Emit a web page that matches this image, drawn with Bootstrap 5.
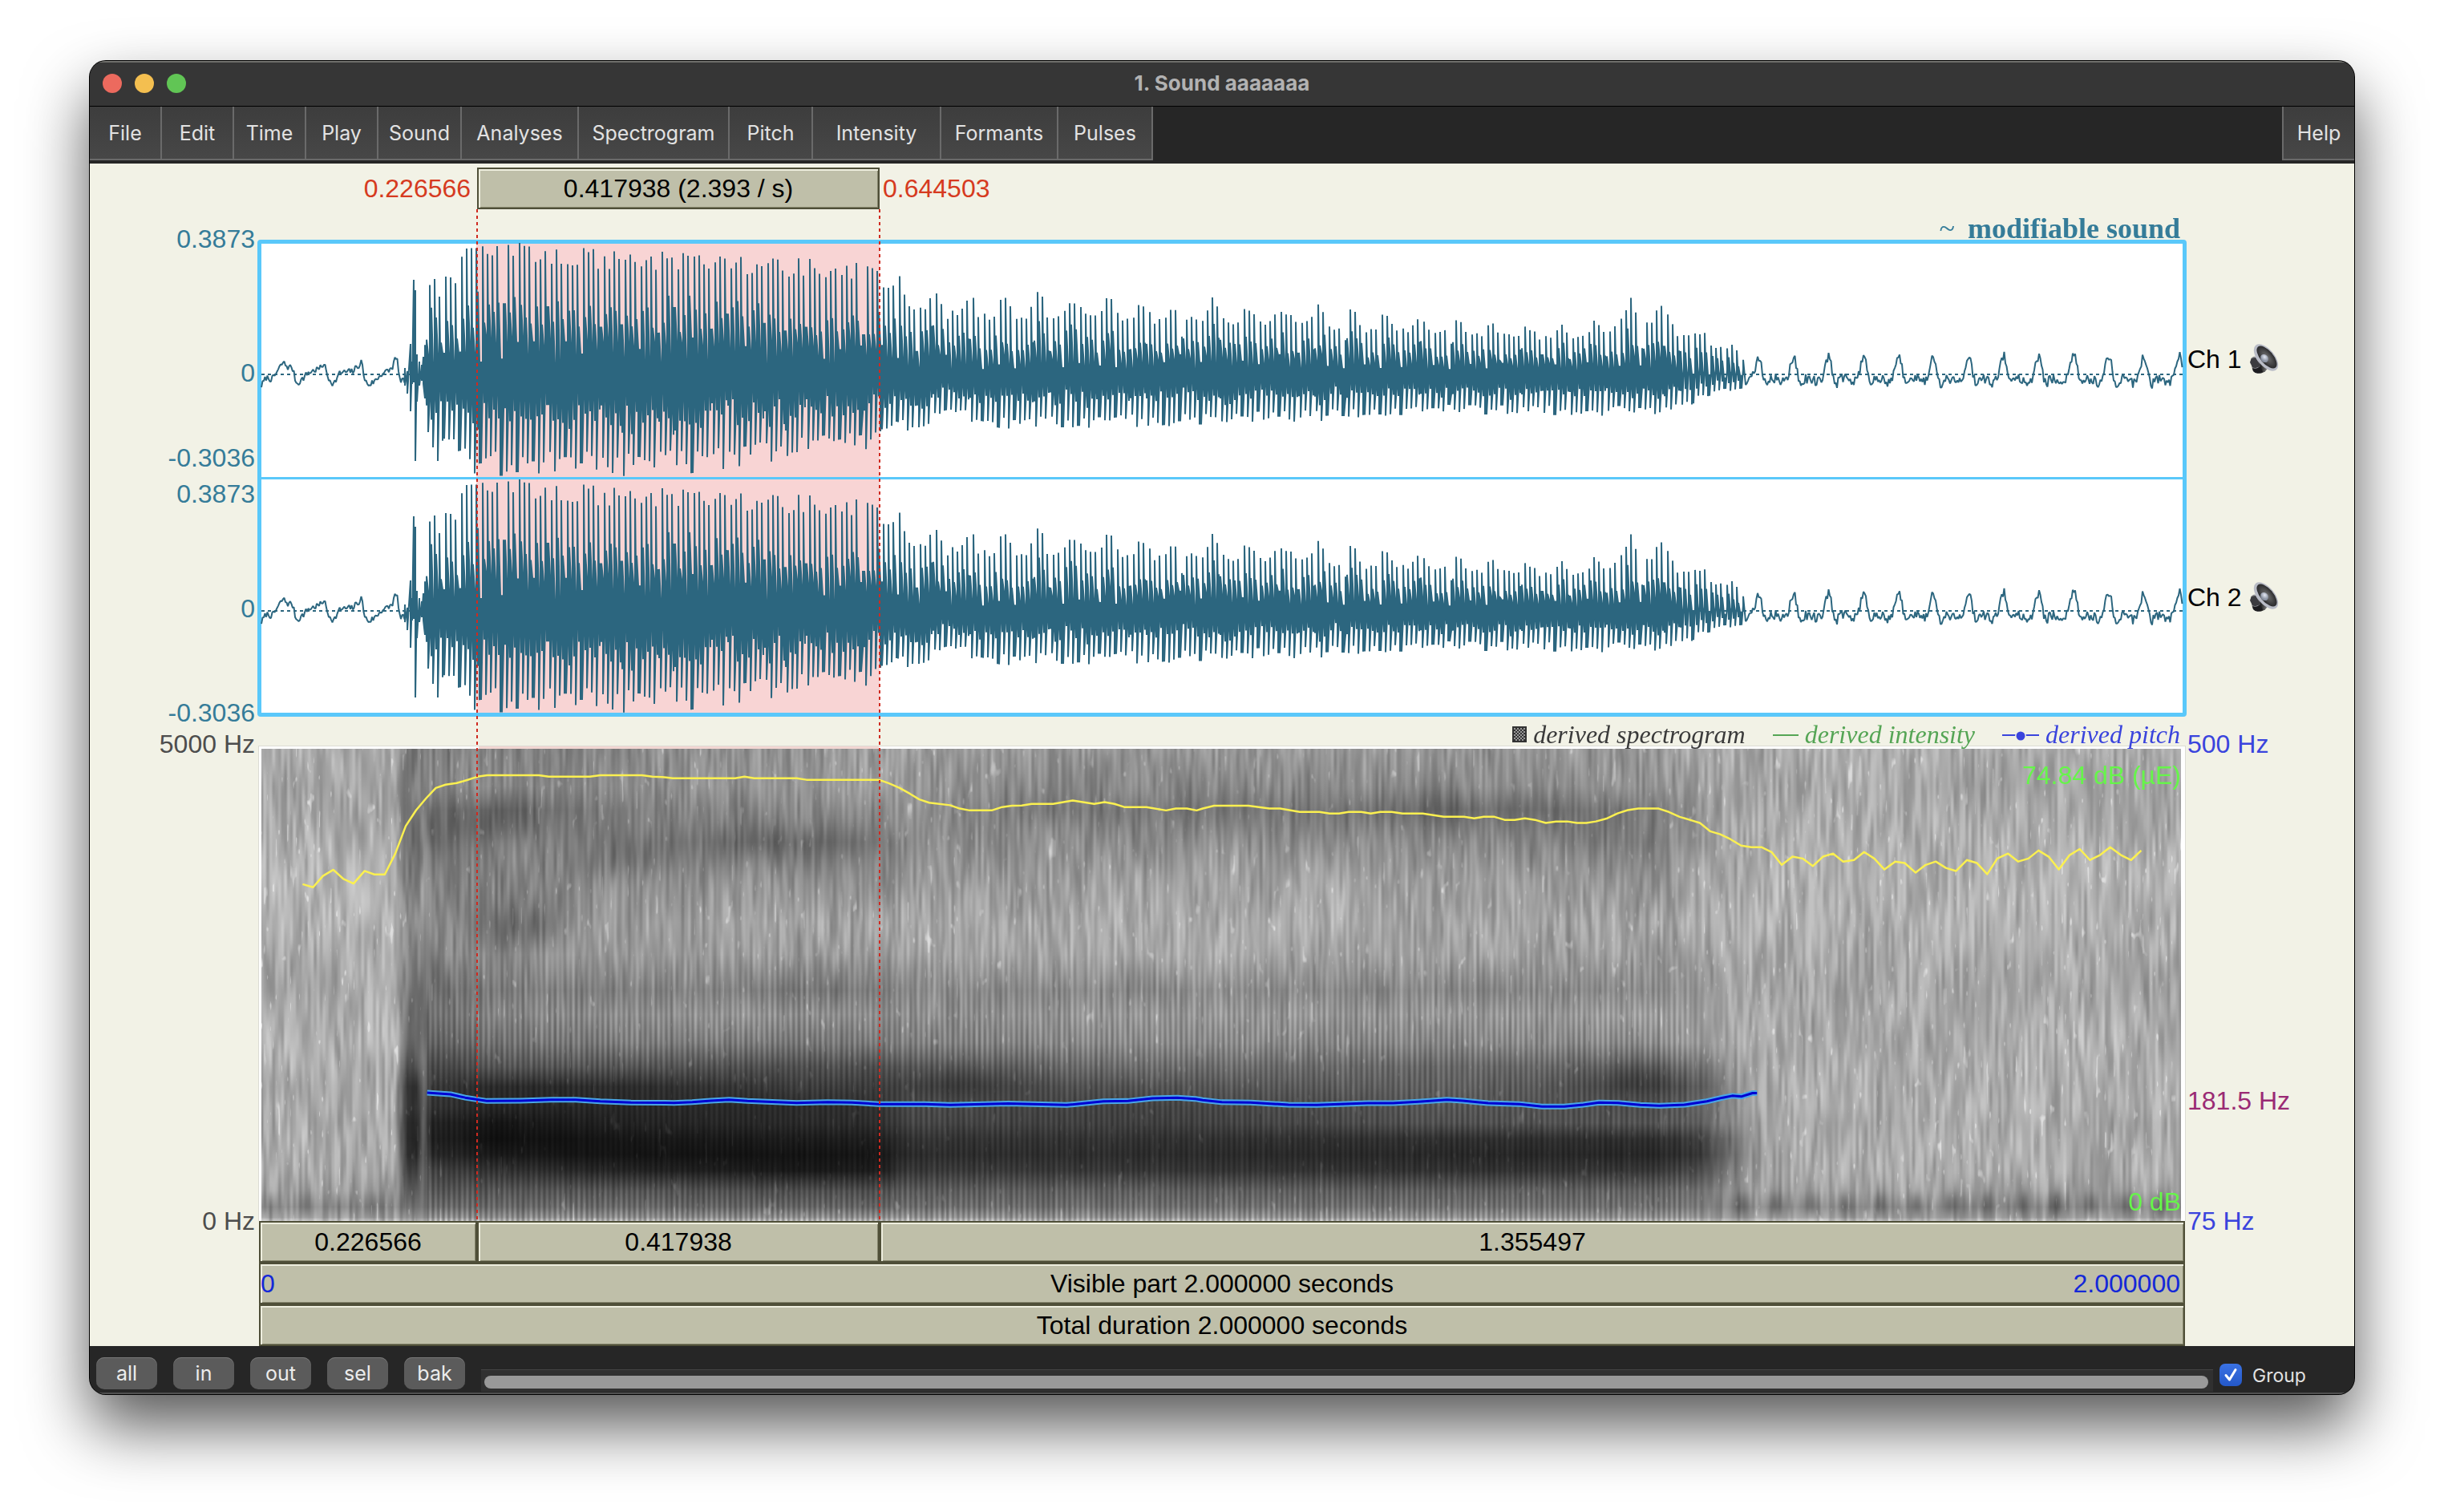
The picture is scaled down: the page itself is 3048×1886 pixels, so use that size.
<!DOCTYPE html>
<html lang="en">
<head>
<meta charset="utf-8">
<meta name="viewport" content="width=device-width, initial-scale=1">
<title>1. Sound aaaaaaa</title>
<link href="https://cdn.jsdelivr.net/npm/bootstrap@5.3.0/dist/css/bootstrap.min.css" rel="stylesheet">
<style>
  :root { --side: 209px; --teal: #357c99; --sky: #5ac8fa; --paper: #f2f2e6; --bar: #bfbfa9; --edge: #4f4f38; }
  body { background: #fff; font-family: Inter, sans-serif; }
  .app-window { margin: 76px 112px 148px; border-radius: 20px; background: #262626; overflow: hidden;
    box-shadow: 0 0 0 1px #000, 0 40px 80px rgba(0,0,0,.66); }
  .title-bar { height: 56px; background: #363636; box-shadow: inset 0 2px 0 #70706c; padding: 0 16px; }
  .title-bar h1 { font-size: 26px; line-height: 54px; font-weight: 700; color: #b2b2b2; }
  .lights { gap: 16px; }
  .light { width: 24px; height: 24px; border-radius: 50%; }
  .menu-strip { height: 72px; border-top: 1px solid #000; background: #262626; }
  .menu-item { height: 67px; padding: 0; border: solid #6a6a6a; border-width: 0 2px 2px 0; color: #e2e2e2;
    background: linear-gradient(#3d3d3d, #474747); font-size: 25px; line-height: 67px; }
  .menu-help { width: 90px; border-width: 0 0 2px 2px; }
  .w-sm { width: 90px; } .w-md { width: 104px; } .w-lg { width: 146px; }
  .w-xl { width: 188px; } .w-int { width: 160px; } .w-pul { width: 118px; }

  .sound-canvas { background: var(--paper); font-family: "Liberation Sans", sans-serif; font-size: 32px; line-height: 36px; color: #000; padding-top: 5px; }
  .side-col { width: var(--side); flex: none; }
  .side-col.start { text-align: right; padding-right: 3px; }
  .side-col.end { padding-left: 1px; }
  .red-time { color: #d63a20; line-height: 52px; }
  .inset-2 { margin: 0 2px; }
  .time-bar { height: 52px; padding: 0; border: 2px solid var(--edge); border-radius: 0; background: var(--bar); color: #000;
    box-shadow: inset 2px 2px 0 #eeeede, inset -1px -1px 0 #85856c; line-height: 48px; text-align: center; }
  .seg-a { width: 11.3283%; } .seg-b { width: 20.8969%; } .seg-c { flex: 1; }

  .legend-line { position: relative; z-index: 1; font-family: "Liberation Serif", serif; padding-right: 8px; }
  .legend-top { height: 38px; padding-top: 5px; font-size: 36px; line-height: 38px; font-weight: 700; color: var(--teal); }
  .legend-low { height: 36px; padding-top: 8px; font-style: italic; font-size: 32px; gap: 34px; }
  .c-spec { color: #3a3a3a; } .c-int { color: #55a555; } .c-pitch { color: #3a44dd; }

  .sound-box { border: 5px solid var(--sky); border-radius: 4px; background: #fff; }
  .wave { display: block; width: 100%; height: 291px; overflow: visible; }
  .wave-second { border-top: 3px solid var(--sky); }
  .axis-labels { color: var(--teal); margin: -19px 0 -13px; gap: 9px; }
  .g-130 { flex: 130 0 0; } .g-70 { flex: 70 0 0; } .g-107 { flex: 107 0 0; } .g-94 { flex: 94 0 0; } .g-409 { flex: 409 0 0; } .g-114 { flex: 114 0 0; }
  .speaker { width: 38px; height: 38px; }

  .spec-frame { margin: 0 1px; border: solid #dcdcd4; border-width: 1px 1px 0; padding: 3px 5px 0 3px; position: relative;
    background: linear-gradient(90deg, #fff 11.4%, #f2d6d2 11.4% 32.2%, #fff 32.2%); }
  .spec-frame canvas { display: block; width: 100%; height: 589px; }
  .spec-lines { position: absolute; left: 0; top: 0; width: 100%; height: 100%; }
  .db-label { position: absolute; right: 5px; color: #66f54a; }
  .db-top { top: 18px; } .db-low { bottom: 6px; }
  .hz-labels { margin: -20px 0 -18px; }

  .sel-overlay { position: absolute; inset: 0 calc(var(--side) + 2px); pointer-events: none; }
  .sel-edge { background: repeating-linear-gradient(#cf2a20 0 4px, transparent 4px 8px); width: 2px; height: 100%; position: absolute; top: 0; }
  .sel-from { left: 11.3%; } .sel-to { left: 32.2%; }

  .foot-bar { height: 60px; background: #262626; box-shadow: inset 0 -2px 0 #505050; padding: 14px 0 0 8px; }
  .zoom-btn { width: 76px; height: 40px; margin-right: 20px; padding: 0; border: 0; border-radius: 10px; background: #5b5b5b; color: #ececec;
    font-size: 25px; line-height: 38px; box-shadow: inset 0 1px 0 #777; flex: none; }
  .scroll-track { height: 28px; background: #303030; border-top: 1px solid #444; padding: 7px 6px 0 4px; margin: 15px 8px 0 0; }
  .scroll-thumb { height: 16px; border-radius: 8px; background: #999; }
  .group-box { width: 168px; flex: none; padding-top: 8px; color: #e2e2e2; font-size: 23px; line-height: 30px; }
  .group-box input { appearance: none; width: 28px; height: 28px; margin: 0 13px 0 0; border-radius: 7px; background: linear-gradient(#3a72e4, #2458c8); }
  .tick { position: absolute; left: 5px; top: 13px; width: 18px; height: 18px; pointer-events: none; }
</style>
</head>
<body>
<main class="app-window">
  <header class="title-bar position-relative d-flex align-items-center">
    <div class="lights d-flex">
      <span class="light" style="background:#ec6a5e"></span>
      <span class="light" style="background:#f4bf50"></span>
      <span class="light" style="background:#61c555"></span>
    </div>
    <h1 class="position-absolute start-0 end-0 text-center m-0">1. Sound aaaaaaa</h1>
  </header>

  <nav class="menu-strip d-flex">
    <button class="menu-item w-sm">File</button>
    <button class="menu-item w-sm">Edit</button>
    <button class="menu-item w-sm">Time</button>
    <button class="menu-item w-sm">Play</button>
    <button class="menu-item w-md">Sound</button>
    <button class="menu-item w-lg">Analyses</button>
    <button class="menu-item w-xl">Spectrogram</button>
    <button class="menu-item w-md">Pitch</button>
    <button class="menu-item w-int">Intensity</button>
    <button class="menu-item w-lg">Formants</button>
    <button class="menu-item w-pul">Pulses</button>
    <button class="menu-item menu-help ms-auto">Help</button>
  </nav>

  <section class="sound-canvas">
    <div class="d-flex">
      <div class="side-col"></div>
      <div class="flex-grow-1 inset-2 d-flex">
        <div class="seg-a red-time text-end pe-2">0.226566</div>
        <button class="time-bar seg-b">0.417938 (2.393 / s)</button>
        <div class="seg-c red-time ps-1">0.644503</div>
      </div>
      <div class="side-col"></div>
    </div>

    <div class="position-relative">
      <div class="d-flex">
        <div class="side-col"></div>
        <div class="flex-grow-1 legend-line legend-top d-flex justify-content-end gap-3"><span class="fw-normal">~</span><span>modifiable sound</span></div>
        <div class="side-col"></div>
      </div>

      <div class="d-flex">
        <div class="side-col start axis-labels d-flex flex-column">
          <div class="flex-fill d-flex flex-column">
            <span>0.3873</span><i class="g-130"></i><span>0</span><i class="g-70"></i><span>-0.3036</span>
          </div>
          <div class="flex-fill d-flex flex-column">
            <span>0.3873</span><i class="g-107"></i><span>0</span><i class="g-94"></i><span>-0.3036</span>
          </div>
        </div>
        <div class="flex-grow-1 sound-box">
          <svg class="wave" viewBox="0 0 2396 291" preserveAspectRatio="none" data-zero="163"></svg>
          <div class="wave-second"><svg class="wave" viewBox="0 0 2396 291" preserveAspectRatio="none" data-zero="164"></svg></div>
        </div>
        <div class="side-col end d-flex flex-column">
          <div class="flex-fill d-flex align-items-center gap-2"><span>Ch 1</span>
            <svg class="speaker" viewBox="0 0 38 38"><use href="#spk"/></svg></div>
          <div class="flex-fill d-flex align-items-center gap-2"><span>Ch 2</span>
            <svg class="speaker" viewBox="0 0 38 38"><use href="#spk"/></svg></div>
        </div>
      </div>

      <div class="d-flex">
        <div class="side-col"></div>
        <div class="flex-grow-1 legend-line legend-low d-flex justify-content-end">
          <span class="c-spec d-flex align-items-center"><svg width="18" height="20" class="me-2" viewBox="0 0 18 20"><defs><pattern id="chk" width="4" height="4" patternUnits="userSpaceOnUse"><rect width="4" height="4" fill="#333"/><circle cx="1" cy="1" r="1" fill="#bbb"/><circle cx="3" cy="3" r="1" fill="#bbb"/></pattern></defs><rect x="1" y="1" width="16" height="18" fill="url(#chk)" stroke="#333" stroke-width="2"/></svg>derived spectrogram</span>
          <span class="c-int d-flex align-items-center"><svg width="32" height="20" class="me-2" viewBox="0 0 32 20"><path d="M0 11H32" stroke="#55a555" stroke-width="2"/></svg>derived intensity</span>
          <span class="c-pitch d-flex align-items-center"><svg width="46" height="20" class="me-2" viewBox="0 0 46 20"><path d="M0 11H46" stroke="#3a44dd" stroke-width="2"/><circle cx="23" cy="12" r="7" fill="#f2f2e6"/><circle cx="23" cy="12" r="5.5" fill="#3a44dd"/></svg>derived pitch</span>
        </div>
        <div class="side-col"></div>
      </div>

      <div class="d-flex">
        <div class="side-col start hz-labels d-flex flex-column justify-content-between" style="color:#4d4d4d"><span>5000 Hz</span><span>0 Hz</span></div>
        <div class="flex-grow-1">
          <div class="spec-frame">
            <canvas id="spectrogram" width="2395" height="589"></canvas>
            <svg class="spec-lines" viewBox="323 930 2402 593" preserveAspectRatio="none" fill="none" stroke-linejoin="round">
              <polyline id="pitchHalo" stroke="#4aa6e6" stroke-width="7"/>
              <polyline id="pitchCore" stroke="#0000d2" stroke-width="3"/>
              <polyline id="intensity" stroke="#fbf050" stroke-width="2.5"/>
            </svg>
            <span class="db-label db-top">74.84 dB (µE)</span>
            <span class="db-label db-low">0 dB</span>
          </div>
        </div>
        <div class="side-col end hz-labels d-flex flex-column c-pitch"><span>500 Hz</span><i class="g-409"></i><span style="color:#9a2a74">181.5 Hz</span><i class="g-114"></i><span>75 Hz</span></div>
      </div>

      <div class="sel-overlay"><div class="sel-edge sel-from"></div><div class="sel-edge sel-to"></div></div>
    </div>

    <div class="d-flex">
      <div class="side-col"></div>
      <div class="flex-grow-1 inset-2 d-flex flex-column">
        <div class="d-flex">
          <button class="time-bar seg-a">0.226566</button><button class="time-bar seg-b">0.417938</button><button class="time-bar seg-c">1.355497</button>
        </div>
        <button class="time-bar position-relative d-flex justify-content-between px-0"><span style="color:#1428d8">0</span><span class="position-absolute start-0 end-0">Visible part 2.000000 seconds</span><span class="pe-1" style="color:#1428d8">2.000000</span></button>
        <button class="time-bar">Total duration 2.000000 seconds</button>
      </div>
      <div class="side-col"></div>
    </div>
  </section>

  <footer class="foot-bar d-flex">
    <button class="zoom-btn">all</button>
    <button class="zoom-btn">in</button>
    <button class="zoom-btn">out</button>
    <button class="zoom-btn">sel</button>
    <button class="zoom-btn">bak</button>
    <div class="scroll-track flex-grow-1"><div class="scroll-thumb"></div></div>
    <div class="group-box position-relative d-flex align-items-start">
      <input type="checkbox" id="grp" checked><label for="grp">Group</label>
      <svg class="tick" viewBox="0 0 18 18"><path d="M3 9.500L7.500 15L15 2.500" fill="none" stroke="#fff" stroke-width="3" stroke-linecap="round" stroke-linejoin="round"/></svg>
    </div>
  </footer>
</main>

<svg width="0" height="0" class="position-absolute">
  <defs>
    <linearGradient id="spkBody" x1="0" x2="1"><stop offset="0" stop-color="#555"/><stop offset=".35" stop-color="#c8c8d0"/><stop offset=".6" stop-color="#222"/><stop offset="1" stop-color="#888"/></linearGradient>
    <radialGradient id="spkCone"><stop offset="0" stop-color="#777"/><stop offset="1" stop-color="#2a2a2c"/></radialGradient>
    <radialGradient id="spkCap" cx=".4" cy=".35"><stop offset="0" stop-color="#e4e8f2"/><stop offset="1" stop-color="#8b93a3"/></radialGradient>
    <g id="spk">
      <path d="M3 19Q6 14 11 16L24 30Q22 35 16 36.500Q8 38 5 32Z" fill="url(#spkBody)"/>
      <path d="M2 23Q3 17 9 17L15 27Q10 32 5 29Z" fill="#3c3c40"/>
      <path d="M5 30Q10 32 15 28L18 35Q10 39 6 34Z" fill="#1d1d20"/>
      <ellipse cx="22" cy="17" rx="20" ry="10.500" transform="rotate(50 22 17)" fill="#b9bcc6"/>
      <ellipse cx="23" cy="16.500" rx="17" ry="8" transform="rotate(50 23 16.500)" fill="url(#spkCone)"/>
      <ellipse cx="20" cy="18" rx="5.500" ry="4.500" transform="rotate(50 20 18)" fill="url(#spkCap)"/>
    </g>
  </defs>
</svg>

<script src="https://cdn.jsdelivr.net/npm/bootstrap@5.3.0/dist/js/bootstrap.bundle.min.js"></script>
<script>
function rng(seed) { return () => { seed = (seed * 1664525 + 1013904223) >>> 0; return seed / 4294967296; }; }
function lerpTable(t, x) {
  if (x <= t[0][0]) return t[0][1];
  for (let i = 1; i < t.length; i++) if (x < t[i][0]) {
    const k = (x - t[i-1][0]) / (t[i][0] - t[i-1][0]); return t[i-1][1] + k * (t[i][1] - t[i-1][1]);
  }
  return t[t.length-1][1];
}

/* ---- waveform ---- */
const X0 = 326;
const up = [[528,60],[534,100],[540,142],[548,115],[556,121],[572,136],[578,164],[588,157],[612,162],[652,163],[700,158],[780,155],[860,152],[900,150],[965,146],[1035,142],[1092,136],[1102,120],[1124,126],[1130,98],[1200,94],[1295,88],[1340,90],[1450,84],[1600,80],[1700,72],[1800,64],[1900,58],[1960,56],[2010,66],[2030,84],[2068,88],[2085,66],[2110,56],[2140,42],[2160,36],[2175,20]];
const down = [[528,50],[534,72],[548,115],[556,102],[575,96],[592,129],[620,126],[680,126],[760,126],[860,124],[1000,102],[1060,96],[1096,90],[1110,68],[1128,74],[1180,54],[1262,70],[1400,66],[1580,60],[1700,56],[1800,50],[1900,50],[2000,52],[2080,50],[2105,42],[2125,28],[2175,18]];
const onset = [[505,8,-14],[508,4,-24],[512,38,-46],[514,16,-12],[516,118,-10],[518,105,-108],[520,25,-34],[523,16,-14],[526,12,-8],[528,22,-12]];
const quiet = [[326,-14],[332,-4],[340,-6],[346,4],[353,15],[360,8],[364,10],[370,-12],[378,-5],[384,2],[392,5],[400,8],[404,14],[409,-4],[416,-12],[424,2],[432,3],[440,4],[448,12],[451,16],[455,-8],[460,-13],[468,-8],[476,1],[484,4],[489,8],[493,20],[496,16],[499,-10],[504,-8]];
function buildWave(svg, seed) {
  const r = rng(seed), zero = +svg.dataset.zero, pts = [];
  const put = (x, v) => pts.push((x - X0).toFixed(1) + ',' + (zero - v).toFixed(1));
  for (let x = 326; x < 505; x += 1.5) put(x, lerpTable(quiet, x) + (r() - .5) * 8);
  onset.forEach(o => { put(o[0], o[1]); put(o[0], o[2]); });
  let phase = 0, jU = 1, jD = 1, jM = .5, base = .25, jB = .3, step = 2 / 6.62;
  for (let x = 530; x < 2176; x += 2) {
    phase += step;
    if (phase >= 1) { phase -= 1; jU = .84 + r() * .17; jD = .76 + r() * .25; jM = .36 + r() * .32; base = .1 + r() * .22; jB = .12 + r() * .26; step = 2 / (6.3 + r() * .64); }
    const beat = x > 1120 ? .86 + .3 * Math.pow(.5 + .5 * Math.cos(2 * Math.PI * (x - 1295) / 43.5), 2) : 1;
    const sparse = x > 2095 ? -.5 : 0;
    const u = lerpTable(up, x) * jU * beat, d = lerpTable(down, x) * jD;
    let hi, lo;
    if (phase < .3) { hi = u; lo = -d * (jB + sparse); }
    else if (phase < .64) { hi = u * jM; lo = -d * (jB + .18 + r() * .14); }
    else { hi = u * (base + sparse * .5); lo = -d; }
    if (phase >= .64) { put(x, hi); put(x, lo); } else { put(x, lo); put(x, hi); }
  }
  for (let x = 2177; x <= 2722; x += 1.5) {
    const t = ((x - 2193 + 437 + 21.85) % 43.7) - 21.85;
    const v = -6 + 30 * Math.exp(-t * t / 28) - 9 * Math.exp(-(t - 9) * (t - 9) / 12) - 5 * Math.exp(-(t + 14) * (t + 14) / 20);
    put(x, v * (.85 + .15 * (x - 2177) / 545) + (r() - .5) * 12);
  }
  svg.innerHTML = '<rect x="268" y="0" width="503" height="291" fill="#f8d4d4"/>' +
    `<path d="M0 ${zero}H2396" stroke="#2c667f" stroke-width="2" stroke-dasharray="4 4"/>` +
    `<polyline points="${pts.join(' ')}" fill="none" stroke="#2c667f" stroke-width="2" stroke-linejoin="bevel"/>`;
}
document.querySelectorAll('.wave').forEach(s => buildWave(s, 7));

/* ---- intensity and pitch tracks: [offset, height] pairs in two time windows ---- */
function track(first, second) {
  const a = first.map(p => [320 + p[0] / 1.3067, 930 + p[1] / 2.6133]);
  const b = second.map(p => [1500 + p[0] / 1.2645, 930 + p[1] / 2.6133]);
  return a.filter(p => p[0] < 1500).concat(b).map(p => p[0].toFixed(1) + ',' + p[1].toFixed(1)).join(' ');
}
document.getElementById('intensity').setAttribute('points', track(
 [[75,450],[92,460],[108,423],[125,403],[141,432],[158,448],[176,407],[192,418],[209,418],[226,350],[243,260],[260,208],[276,170],[292,136],[308,125],[326,120],[343,110],[360,99],[376,94],[460,94],[476,99],[543,99],[560,94],[628,94],[645,99],[661,100],[678,104],[780,104],[795,99],[811,104],[880,104],[896,109],[1014,109],[1030,120],[1048,136],[1065,155],[1080,173],[1096,184],[1130,192],[1146,203],[1162,209],[1198,209],[1215,198],[1231,194],[1247,193],[1263,188],[1298,188],[1330,177],[1365,188],[1382,182],[1398,188],[1414,198],[1450,198],[1482,209],[1498,203],[1516,203],[1532,209]],
 [[0,203],[18,194],[72,194],[105,203],[122,203],[153,214],[184,214],[200,219],[215,219],[230,214],[250,214],[265,219],[280,214],[298,214],[315,219],[347,219],[380,230],[412,230],[428,235],[443,230],[460,230],[476,240],[492,240],[508,235],[524,240],[541,250],[557,245],[575,245],[590,250],[605,250],[620,245],[638,235],[654,219],[670,208],[687,203],[719,203],[735,214],[752,230],[768,240],[784,250],[800,277],[816,287],[832,303],[849,324],[865,329],[881,329],[897,345],[913,387],[930,360],[946,366],[962,391],[978,360],[994,350],[1010,376],[1027,371],[1043,345],[1059,366],[1075,402],[1092,376],[1107,381],[1124,412],[1140,387],[1156,376],[1172,397],[1188,407],[1205,371],[1221,381],[1237,417],[1253,366],[1270,350],[1286,376],[1302,366],[1318,340],[1334,360],[1350,402],[1367,355],[1383,335],[1399,371],[1415,355],[1431,329],[1448,355],[1464,371],[1480,340]]));
const pitch = track(
 [[278,1131],[316,1136],[340,1147],[375,1158],[430,1157],[480,1154],[520,1154],[560,1159],[610,1163],[680,1164],[710,1162],[740,1157],[770,1154],[800,1158],[880,1164],[930,1162],[970,1163],[1014,1168],[1090,1168],[1130,1171],[1225,1166],[1320,1171],[1380,1159],[1420,1158],[1460,1149],[1500,1147],[1530,1151]],
 [[0,1155],[30,1162],[75,1163],[135,1170],[180,1171],[260,1165],[300,1165],[340,1160],[385,1154],[410,1157],[450,1165],[500,1168],[535,1176],[570,1176],[600,1170],[625,1163],[655,1164],[690,1171],[720,1173],[760,1170],[795,1159],[820,1147],[835,1141],[850,1143],[867,1132],[874,1132]]);
document.getElementById('pitchHalo').setAttribute('points', pitch);
document.getElementById('pitchCore').setAttribute('points', pitch);

/* ---- spectrogram ---- */
const yk = [934,980,1010,1050,1100,1150,1190,1235,1265,1300,1330,1355,1380,1400,1420,1440,1460,1485,1505,1518,1523];
const N  = [170,164,168,174,178,175,170,165,170,175,175,171,173,168,171,171,170,160,138,158,200];
const grid = [
 [326,N],[492,N],
 [508,[125,125,115,110,125,135,135,118,105,90,75,50,50,35,30,35,60,95,120,150,185]],
 [519,[125,125,115,110,125,135,135,118,105,90,75,50,50,35,30,35,60,95,120,150,185]],
 [527,[135,140,140,145,155,155,150,125,115,112,105,105,100,100,95,95,105,110,120,150,190]],
 [538,[130,130,110,110,130,140,140,115,110,95,70,55,50,35,32,40,65,85,105,140,185]],
 [620,[130,138,108,128,134,138,150,122,130,115,85,42,38,22,16,25,50,85,105,140,185]],
 [800,[140,140,128,128,145,158,155,132,145,125,85,45,40,36,24,20,35,85,105,140,185]],
 [1000,[150,155,135,118,145,165,160,125,145,122,80,62,45,42,28,20,26,78,100,140,185]],
 [1096,[155,155,138,125,145,165,160,130,145,122,78,62,50,45,30,22,30,80,102,145,190]],
 [1135,[155,150,145,145,152,168,162,142,145,128,88,72,75,70,52,45,58,92,108,145,190]],
 [1400,[150,135,124,142,160,170,165,138,150,138,108,82,66,62,50,45,55,95,112,145,190]],
 [1800,[150,135,115,140,162,168,160,135,150,135,105,98,86,80,48,40,50,95,112,145,190]],
 [2060,[160,148,120,118,145,165,160,140,155,140,98,76,80,85,48,40,55,98,112,145,190]],
 [2120,[168,160,150,145,160,170,165,155,160,155,118,95,100,92,60,52,75,112,120,145,190]],
 [2160,[172,168,165,168,170,172,170,168,168,165,155,150,145,138,115,112,125,140,130,150,190]],
 [2200,N],[2724,N]];
const blobs = [[655,1155,60,30,28],[610,1030,80,26,14],[920,1050,80,24,18],[1060,1050,60,24,14],[780,1075,60,26,18],[1200,1350,70,20,16],[2045,1346,60,20,18],[1350,1012,140,20,10],[1820,1008,110,22,10],[2320,1300,50,24,8],[460,1330,26,24,10]];
function streaks(seed, cw, ch) {
  const hash = (a, b) => { let h = (a * 374761393 + b * 668265263 + seed * 144665) | 0; h = Math.imul(h ^ (h >>> 13), 1274126177); return ((h ^ (h >>> 16)) >>> 0) / 4294967296; };
  const col = (i, y) => { const v = y / ch + hash(i, 99991) * 7, j = Math.floor(v); let k = v - j; k = k * k * (3 - 2 * k); return hash(i, j) * (1 - k) + hash(i, j + 1) * k; };
  return (x, y) => { const u = x / cw, i = Math.floor(u); let k = u - i; k = k * k * (3 - 2 * k); return col(i, y) * (1 - k) + col(i + 1, y) * k; };
}
(function () {
  const cv = document.getElementById('spectrogram'), W = cv.width, H = cv.height, g = cv.getContext('2d');
  const img = g.createImageData(W, H), d = img.data;
  const s1 = streaks(1, 3.7, 42), s2 = streaks(2, 8, 70), s3 = streaks(3, 45, 60), s4 = streaks(4, 3.6, 15);
  const yi = [], yt = [];
  for (let y = 0; y < H; y++) { let i = 0; while (i < yk.length - 2 && y + 934 >= yk[i+1]) i++; yi.push(i); yt.push((y + 934 - yk[i]) / (yk[i+1] - yk[i])); }
  for (let x = 0; x < W; x++) {
    const fx = x + 326; let c = 0; while (c < grid.length - 2 && fx >= grid[c+1][0]) c++;
    const kx = Math.min(1, (fx - grid[c][0]) / (grid[c+1][0] - grid[c][0])), A = grid[c][1], B = grid[c+1][1];
    const P = A.map((v, i) => v + kx * (B[i] - v));
    const voiced = fx > 532 && fx < 2150 ? Math.min(1, (2150 - fx) / 60) : 0;
    const stripe = Math.cos(2 * Math.PI * fx / 6.62);
    const blobX = blobs.map(b => { const q = (fx - b[0]) / b[2]; return Math.exp(-q * q) * b[4]; });
    const q = (((fx - 2193 + 4370) % 43.7) - 21.85) / 9, ring = Math.exp(-q * q) * (fx > 2150 ? 36 : fx < 505 ? 18 : 0);
    for (let y = 0; y < H; y++) {
      const fy = y + 934, i = yi[y];
      let v = P[i] + yt[y] * (P[i+1] - P[i]);
      for (let b = 0; b < blobs.length; b++) if (blobX[b] > .5) { const w = (fy - blobs[b][1]) / blobs[b][3]; v -= blobX[b] * Math.exp(-w * w); }
      if (ring > 1) { const w = (fy - 1502) / 18; v -= ring * Math.exp(-w * w); }
      const low = Math.max(0, Math.min(1, (fy - 1180) / 130)) * voiced;
      const n = (s1(x, y) - .5) * .95 * (1 - .5 * low) + (s2(x, y) - .5) * .32 * (1 - .8 * low);
      v += n * (v * .28 + 5) + (s3(x, y) - .5) * 12 * (1 - low);
      v *= 1 + stripe * (.03 * voiced + .13 * low);
      const sp = s4(x, y); if (sp > .87) v += (sp - .87) * 330 * (.35 + .65 * (v / 160));
      v = v < 8 ? 8 : v > 222 ? 222 : v;
      const o = (y * W + x) * 4; d[o] = d[o+1] = d[o+2] = v; d[o+3] = 255;
    }
  }
  g.putImageData(img, 0, 0);
})();
</script>
</body>
</html>
